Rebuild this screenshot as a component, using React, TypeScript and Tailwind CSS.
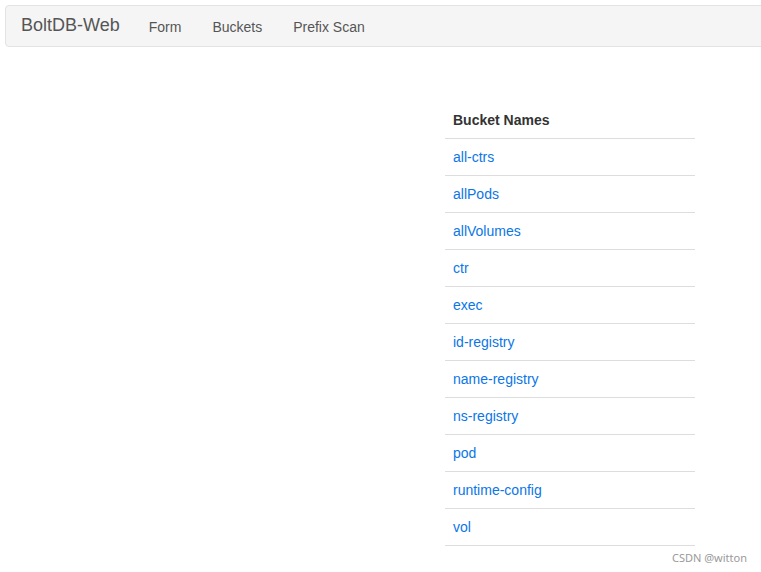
const BUCKETS = [
  'all-ctrs',
  'allPods',
  'allVolumes',
  'ctr',
  'exec',
  'id-registry',
  'name-registry',
  'ns-registry',
  'pod',
  'runtime-config',
  'vol',
]

const NAV_LINKS = ['Form', 'Buckets', 'Prefix Scan']

export default function App() {
  return (
    <div className="relative h-[572px] w-[761px] overflow-hidden bg-white font-['Liberation_Sans',Arial,sans-serif] text-[14px] text-[#333]">
      <div className="pl-[5px] pt-[5px]">
        <nav className="flex h-[42px] w-[780px] items-center rounded-[4px] border border-[#e3e3e3] bg-[#f5f5f5]">
          <a className="pl-[15px] pr-[14px] pb-[2px] text-[18px] leading-[20px] text-[#555]">BoltDB-Web</a>
          {NAV_LINKS.map(l => (
            <a key={l} className="pl-[15px] pr-[16px] pt-[1px] text-[14px] leading-[20px] text-[#555]">
              {l}
            </a>
          ))}
        </nav>
      </div>

      <div className="ml-[445px] mt-[55px] w-[250px]">
        <table className="w-full border-collapse">
          <thead>
            <tr className="border-b border-[#ddd]">
              <th className="p-[8px] text-left text-[14px] font-bold leading-[20px] text-[#333]">Bucket Names</th>
            </tr>
          </thead>
          <tbody>
            {BUCKETS.map(b => (
              <tr key={b} className="border-b border-[#ddd]">
                <td className="p-[8px] leading-[20px]">
                  <a className="text-[#0b76e6]">{b}</a>
                </td>
              </tr>
            ))}
          </tbody>
        </table>
      </div>

      <div className="absolute bottom-[6px] right-[14px] font-['Noto_Sans',sans-serif] text-[11px] text-[#9a9a9a]">
        CSDN @witton
      </div>
    </div>
  )
}
